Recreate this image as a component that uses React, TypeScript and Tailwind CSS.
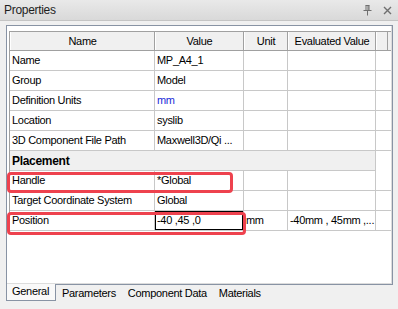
import React from 'react';

const rows = [
  { name: 'Name', value: 'MP_A4_1' },
  { name: 'Group', value: 'Model' },
  { name: 'Definition Units', value: 'mm', blue: true },
  { name: 'Location', value: 'syslib' },
  { name: '3D Component File Path', value: 'Maxwell3D/Qi ...' },
];

const placementRows = [
  { name: 'Handle', value: '*Global' },
  { name: 'Target Coordinate System', value: 'Global' },
  { name: 'Position', value: '-40 ,45 ,0', unit: 'mm', evaluated: '-40mm , 45mm ,...', editing: true },
];

const tabs = ['General', 'Parameters', 'Component Data', 'Materials'];

function PinIcon() {
  return (
    <svg width="9" height="11" viewBox="0 0 9 11" className="text-[#6f6f6f]">
      <path d="M2.5 0.5h4M3 0.5v5M6 0.5v5M5 0.5v5M0.5 5.5h8M4.5 5.5v5" stroke="currentColor" strokeWidth="1" fill="none" />
    </svg>
  );
}

function CloseIcon() {
  return (
    <svg width="9" height="9" viewBox="0 0 9 9" className="text-[#6f6f6f]">
      <path d="M1 1l7 7M8 1l-7 7" stroke="currentColor" strokeWidth="1.4" fill="none" />
    </svg>
  );
}

function Row({
  name,
  value,
  unit,
  evaluated,
  blue,
  editing,
}: {
  name: string;
  value: string;
  unit?: string;
  evaluated?: string;
  blue?: boolean;
  editing?: boolean;
}) {
  return (
    <div className="flex h-[20px] border-b border-[#c8c8c8] bg-white">
      <div className="flex w-[145px] items-center border-r border-[#c8c8c8] pl-[2px]">{name}</div>
      <div className="flex w-[89px] items-center border-r border-[#c8c8c8]">
        {editing ? (
          <div className="flex h-full w-full items-center border border-black pl-[1px]">{value}</div>
        ) : (
          <span className={blue ? 'pl-[2px] text-[#1a2bd8]' : 'pl-[2px]'}>{value}</span>
        )}
      </div>
      <div className="flex w-[44px] items-center border-r border-[#c8c8c8] pl-[2px]">{unit}</div>
      <div className="flex w-[88px] items-center border-r border-[#c8c8c8] pl-[2px]">{evaluated}</div>
    </div>
  );
}

export default function App() {
  return (
    <div
      className="relative h-[309px] w-[398px] overflow-hidden bg-[#f0f0f0] text-[11px] tracking-[-0.3px] text-black"
      style={{ fontFamily: '"Liberation Sans", Arial, sans-serif' }}
    >
      <div className="flex h-[21px] items-center justify-between border-b border-[#c4c4c4] bg-gradient-to-b from-[#e9e9e9] to-[#d9d9d9] pl-[4px] pr-[6px]">
        <span className="text-[12px] text-[#1e1e1e]">Properties</span>
        <div className="flex items-center gap-[11px]">
          <PinIcon />
          <CloseIcon />
        </div>
      </div>

      <div className="pl-[6px] pt-[4px]">
        <div className="h-[260px] w-[387px] border border-[#8893a4] bg-white">
          <div className="h-full border-b border-r border-[#dcdcdc] border-l-[#a0a0a0] pl-[1px] pt-[5px]">
            <div className="border-l border-[#a0a0a0] ml-[1px]">
              <div className="flex h-[20px] border-b border-t border-[#a0a0a0] bg-[#f0f0f0]">
                {[
                  ['Name', 'w-[145px]'],
                  ['Value', 'w-[89px]'],
                  ['Unit', 'w-[44px]'],
                  ['Evaluated Value', 'w-[88px]'],
                  ['', 'w-[12px]'],
                ].map(([label, w]) => (
                  <div
                    key={label + w}
                    className={`${w} flex items-center justify-center border-l border-r border-l-white border-r-[#a0a0a0]`}
                  >
                    {label}
                  </div>
                ))}
              </div>
              {rows.map((r) => (
                <Row key={r.name} {...r} />
              ))}
              <div className="flex h-[20px] w-[366px] items-center border-b border-r border-[#c8c8c8] bg-[#f0f0f0] pl-[2px] text-[12px] font-bold">
                Placement
              </div>
              {placementRows.map((r) => (
                <Row key={r.name} {...r} />
              ))}
            </div>
          </div>
        </div>

        <div className="flex h-[16px] items-center">
          {tabs.map((t, i) => (
            <div
              key={t}
              className={
                i === 0
                  ? '-mt-[2px] flex h-[17px] w-[50px] items-center border-b border-l border-r border-[#8893a4] bg-[#f9f9f9] pl-[5px]'
                  : 'flex h-[16px] items-center px-[6px]'
              }
            >
              {t}
            </div>
          ))}
        </div>
      </div>

      <div className="absolute left-[7px] top-[172px] h-[21px] w-[226px] rounded-[4px] border-[3px] border-[#ee424e]" />
      <div className="absolute left-[7px] top-[212px] h-[23px] w-[239px] rounded-[4px] border-[3px] border-[#ee424e]" />
    </div>
  );
}
